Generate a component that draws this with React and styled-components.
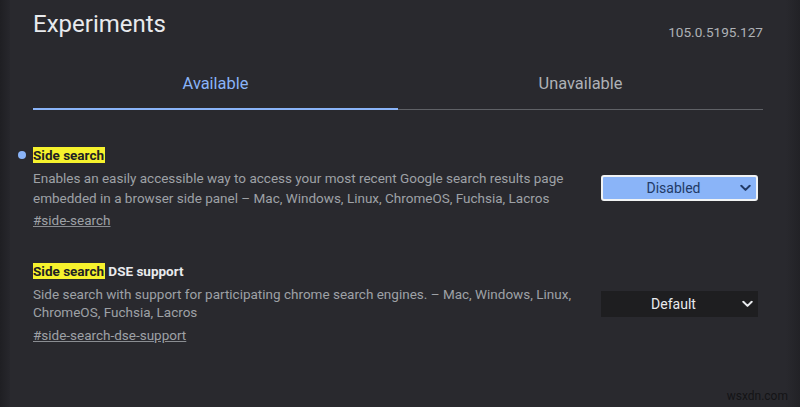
import React from "react";
import styled, { createGlobalStyle } from "styled-components";

const GlobalStyle = createGlobalStyle`
	html, body {
		margin: 0;
		padding: 0;
		background: #29292e;
	}
	body {
		font-family: Roboto, "Liberation Sans", Arial, sans-serif;
		-webkit-font-smoothing: antialiased;
	}
`;

const Page = styled.div`
	position: relative;
	width: 800px;
	height: 407px;
	overflow: hidden;
	display: grid;
	grid-template-columns: 10px 1fr 14px;
	background: #29292e;
`;

const EdgeLeft = styled.div`
	background: linear-gradient(90deg, #1f1f23, #27272c);
`;

const EdgeRight = styled.div`
	background: linear-gradient(90deg, #29292e, #222226);
`;

const Main = styled.main`
	width: 730px;
	padding-left: 23px;
`;

const Header = styled.header`
	display: flex;
	justify-content: space-between;
	align-items: flex-start;
	padding-top: 10px;
`;

const Title = styled.h1`
	margin: 0;
	font-size: 24px;
	font-weight: 400;
	color: #e8eaed;
	line-height: 28px;
`;

const Version = styled.span`
	margin-top: 14px;
	font-size: 13.6px;
	line-height: 16px;
	color: #aeb1b6;
`;

const Tabs = styled.nav`
	display: grid;
	grid-template-columns: 1fr 1fr;
	margin-top: 22px;
`;

const Tab = styled.div`
	text-align: center;
	font-size: 16.4px;
	line-height: 20px;
	padding: 12px 0 14px;
	color: ${(p) => (p.$active ? "#8ab4f8" : "#aeb1b6")};
	border-bottom: ${(p) => (p.$active ? "2px solid #8ab4f8" : "1px solid #5f6166")};
	${(p) => !p.$active && "padding-bottom: 15px;"}
`;

const Feature = styled.section`
	position: relative;
	display: grid;
	grid-template-columns: 1fr 157px;
	column-gap: 26px;
	align-items: center;
	padding-right: 5px;
	margin-top: ${(p) => p.$top}px;
`;

const Dot = styled.span`
	position: absolute;
	left: -15px;
	top: 5px;
	width: 8px;
	height: 8px;
	border-radius: 50%;
	background: #8ab4f8;
`;

const Info = styled.div`
	display: flex;
	flex-direction: column;
`;

const Name = styled.h2`
	margin: 0;
	font-size: 13.5px;
	font-weight: 700;
	line-height: 18px;
	color: #e8eaed;

	mark {
		background: #f6f22d;
		color: #202124;
		padding: 0 1px 0 0;
	}
`;

const Desc = styled.p`
	margin: ${(p) => p.$gap}px 0 0;
	font-size: 13.5px;
	line-height: ${(p) => p.$lh}px;
	color: #9ea1a6;
`;

const Link = styled.a`
	margin-top: ${(p) => p.$gap}px;
	font-size: 13.5px;
	line-height: 20px;
	color: #9ea1a6;
	text-decoration: underline;
	text-decoration-color: #8a8d92;
`;

const Select = styled.div`
	box-sizing: border-box;
	height: 26px;
	display: flex;
	align-items: center;
	justify-content: center;
	position: relative;
	padding-right: 12px;
	font-size: 14px;
	border-radius: ${(p) => (p.$enabled ? "3px" : "0")};
	background: ${(p) => (p.$enabled ? "#8ab4f8" : "#1e1e20")};
	border: ${(p) => (p.$enabled ? "2px solid #f1f3f4" : "none")};
	color: ${(p) => (p.$enabled ? "#223a66" : "#e8eaed")};

	svg {
		position: absolute;
		right: 5px;
		top: 50%;
		transform: translateY(-50%);
	}
`;

const Watermark = styled.span`
	position: absolute;
	right: 12px;
	bottom: 4px;
	font-size: 12px;
	color: #141416;
`;

function Chevron({ color }) {
	return (
		<svg width="11" height="7" viewBox="0 0 11 7">
			<path
				d="M1.3 1.2 L5.5 5.4 L9.7 1.2"
				fill="none"
				stroke={color}
				strokeWidth="2"
				strokeLinecap="round"
				strokeLinejoin="round"
			/>
		</svg>
	);
}

export default function App() {
	return (
		<>
			<GlobalStyle />
			<Page>
				<EdgeLeft />
				<Main>
					<Header>
						<Title>Experiments</Title>
						<Version>105.0.5195.127</Version>
					</Header>

					<Tabs>
						<Tab $active>Available</Tab>
						<Tab>Unavailable</Tab>
					</Tabs>

					<Feature $top={36}>
						<Dot />
						<Info>
							<Name>
								<mark>Side search</mark>
							</Name>
							<Desc $lh={20} $gap={4}>
								Enables an easily accessible way to access your most recent Google search
								results page embedded in a browser side panel – Mac, Windows, Linux,
								ChromeOS, Fuchsia, Lacros
							</Desc>
							<Link $gap={2}>#side-search</Link>
						</Info>
						<Select $enabled>
							Disabled
							<Chevron color="#223a66" />
						</Select>
					</Feature>

					<Feature $top={32}>
						<Info>
							<Name>
								<mark>Side search</mark> DSE support
							</Name>
							<Desc $lh={18} $gap={5}>
								Side search with support for participating chrome search engines. – Mac,
								Windows, Linux, ChromeOS, Fuchsia, Lacros
							</Desc>
							<Link $gap={4}>#side-search-dse-support</Link>
						</Info>
						<Select>
							Default
							<Chevron color="#e8eaed" />
						</Select>
					</Feature>
				</Main>
				<EdgeRight />
				<Watermark>wsxdn.com</Watermark>
			</Page>
		</>
	);
}
